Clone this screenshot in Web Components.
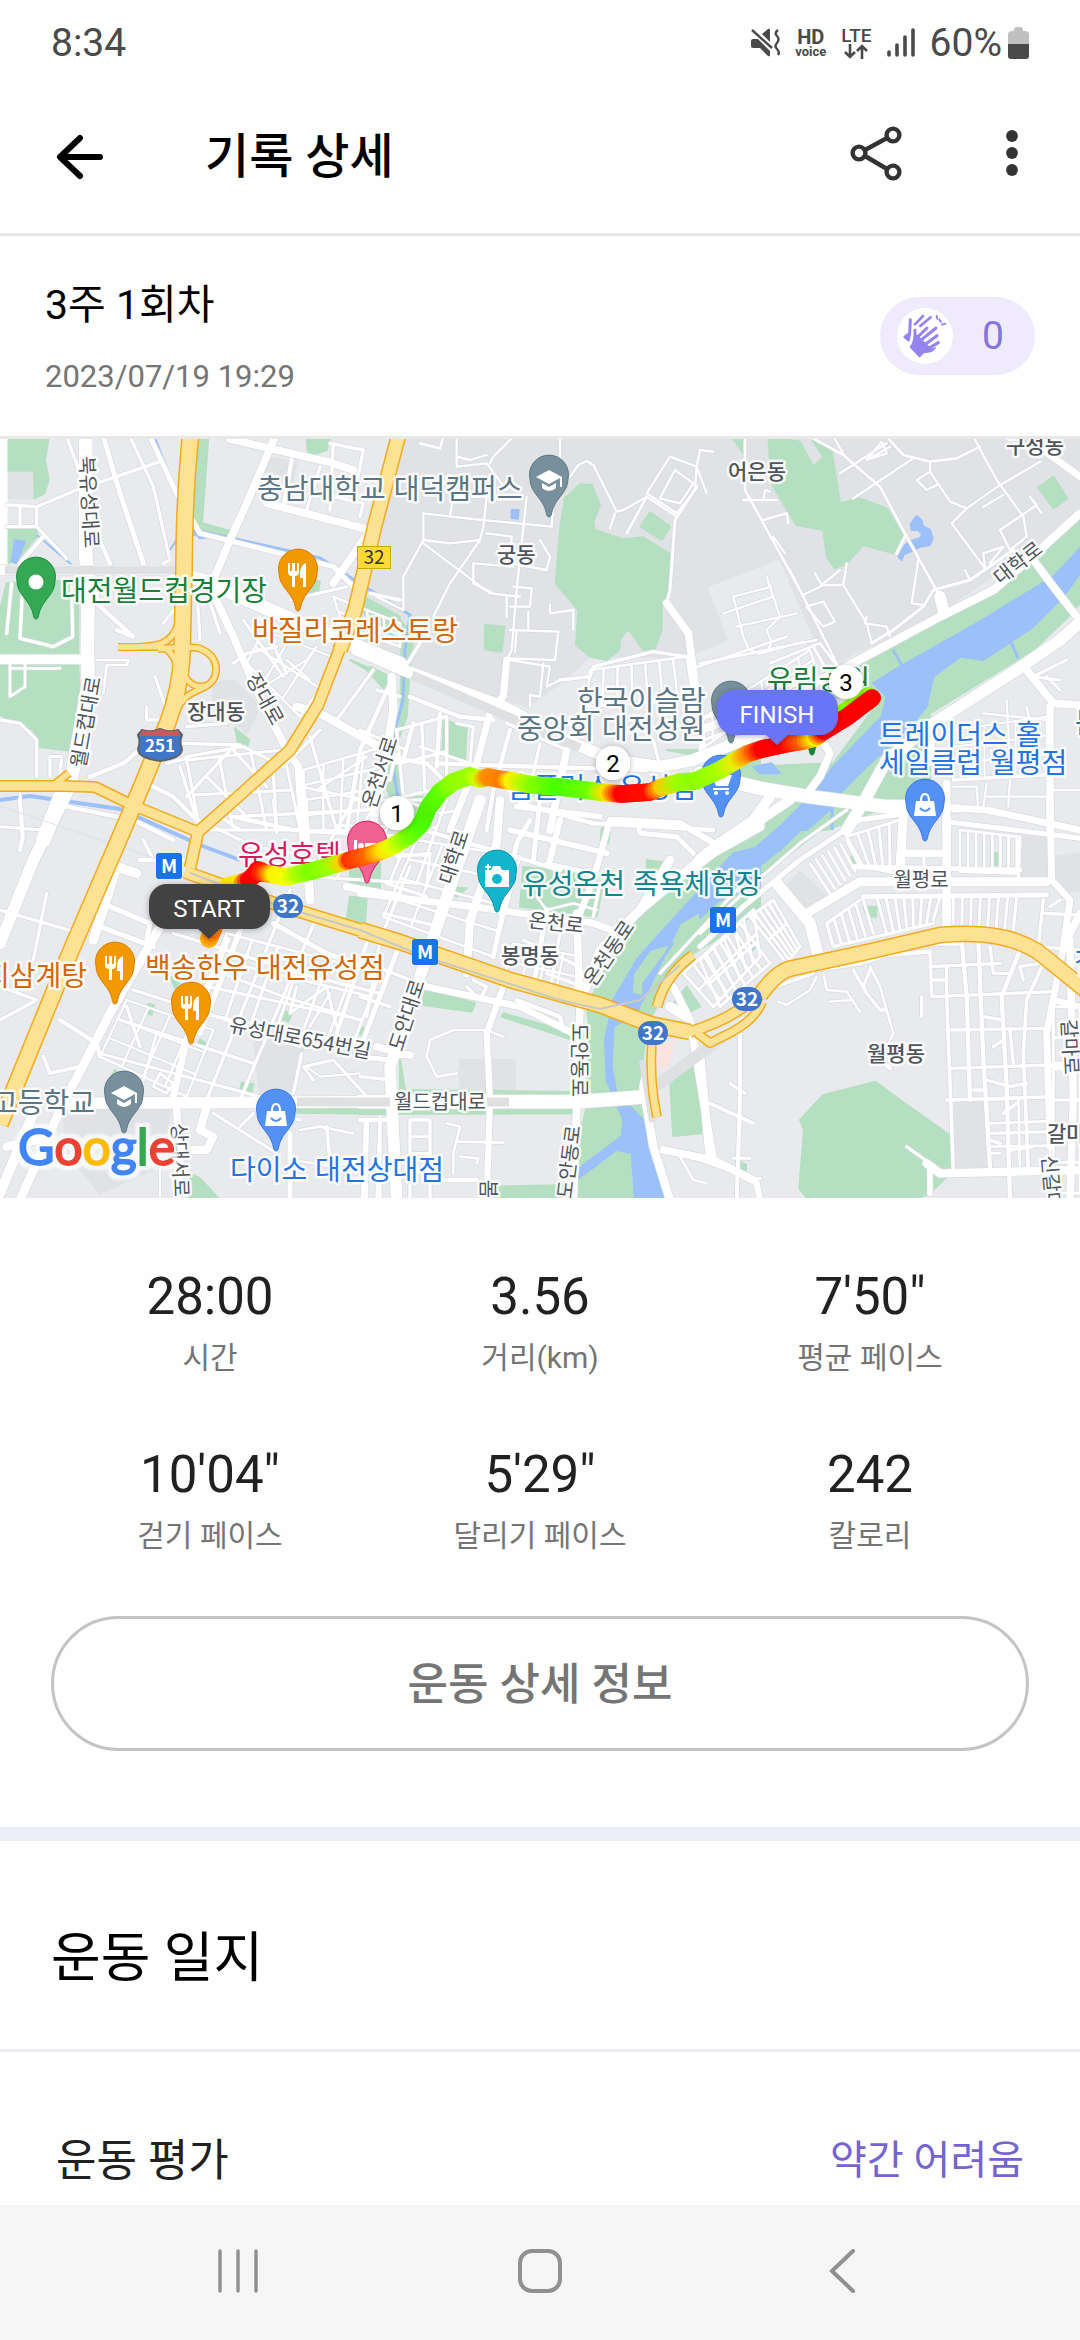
<!DOCTYPE html>
<html lang="ko">
<head>
<meta charset="utf-8">
<meta name="viewport" content="width=device-width, initial-scale=1">
<title>기록 상세</title>
<style>
  body { margin: 0; background: #fefefe; font-family: Roboto, "Noto Sans CJK KR", sans-serif; color: #000; }
</style>
</head>
<body>
<run-app></run-app>

<script>
const define = (name, html, after) => {
  const template = document.createElement('template');
  template.innerHTML = html;
  customElements.define(name, class extends HTMLElement {
    constructor() {
      super();
      this.attachShadow({ mode: 'open' }).append(template.content.cloneNode(true));
      if (after) after(this.shadowRoot, this);
    }
  });
};

define('status-bar', `
<style>
  :host { display: flex; align-items: center; justify-content: space-between; height: 80px; padding: 6px 51px 0; box-sizing: border-box; color: #4a4a4a; font-size: 39px; line-height: 44px; }
  .icons { display: flex; align-items: center; gap: 15px; }
  .stack { display: flex; flex-direction: column; align-items: center; font-weight: 700; font-size: 20px; line-height: 17px; }
  .voice { font-size: 13px; line-height: 11px; }
  .lte { font-weight: 500; font-size: 19px; }
  .power { display: flex; align-items: center; gap: 6px; }
  svg { display: block; }
</style>
<time>8:34</time>
<div class="icons">
  <svg width="30" height="30" viewBox="0 0 30 30" fill="#4a4a4a"><path d="M1 13q0-2 2-2h5l12 12v4q0 2-2 1L10 20H3q-2 0-2-2zM12 6l6-5q2-1 2 1v12z"/><path d="M2 2l20 18M28 2q-4 3-1 6t0 7q-3 3 0 6t1 6" fill="none" stroke="#4a4a4a" stroke-width="2.4"/></svg>
  <span class="stack"><span>HD</span><span class="voice">voice</span></span>
  <span class="stack"><span class="lte">LTE</span><svg width="24" height="15" viewBox="0 0 24 15" fill="none" stroke="#4a4a4a" stroke-width="2.6"><path d="M6 0v13M1 8l5 5 5-5M18 15V2M13 7l5-5 5 5"/></svg></span>
  <svg width="28" height="30" viewBox="0 0 28 30" fill="none" stroke="#4a4a4a" stroke-width="3.6" stroke-linecap="round"><path d="M2 24v3M10 17v10M18 9v18M26 2v25"/></svg>
  <span class="power"><span>60%</span>
  <svg width="21" height="32" viewBox="0 0 21 32"><path d="M6 3q0-3 3-3h3q3 0 3 3v1h2q4 0 4 4v9H0V8q0-4 4-4h2z" fill="#c0c0c0"/><path d="M0 17h21v12q0 3-3 3H3q-3 0-3-3z" fill="#4a4a4a"/></svg></span>
</div>`);

define('app-header', `
<style>
  :host { display: flex; align-items: center; height: 156px; box-sizing: border-box; padding: 0 28px; border-bottom: 3px solid #e8e8e8; }
  button { display: flex; align-items: center; justify-content: center; width: 80px; height: 100px; padding: 0; border: 0; background: none; }
  .back { width: 104px; }
  h1 { flex: 1; margin: 0 0 0 73px; font-size: 48px; line-height: 64px; font-weight: 500; }
  .actions { display: flex; gap: 56px; }
</style>
<button class="back" aria-label="뒤로"><svg width="48" height="48" viewBox="0 0 48 48" fill="none" stroke="#000" stroke-width="6" stroke-linecap="round" stroke-linejoin="round"><path d="M44 24H5M24 5L4 24l20 19"/></svg></button>
<h1><slot></slot></h1>
<div class="actions">
  <button aria-label="공유"><svg width="52" height="62" viewBox="0 0 52 62" fill="none" stroke="#333" stroke-width="4.4"><circle cx="43" cy="9" r="6.4"/><circle cx="9" cy="27" r="6.4"/><circle cx="43" cy="46" r="6.4"/><path d="M15 24l22-12M15 30l22 13"/></svg></button>
  <button aria-label="더보기"><svg width="20" height="54" viewBox="0 0 20 54" fill="#333"><circle cx="10" cy="6" r="5.9"/><circle cx="10" cy="23" r="5.9"/><circle cx="10" cy="40" r="5.9"/></svg></button>
</div>`);

define('cheer-button', `
<style>
  :host { display: block; }
  button { display: flex; align-items: center; width: 155px; height: 78px; padding: 0 0 0 17px; border: 0; border-radius: 39px; background: #efebfd; color: #8676dc; font: 400 39px/46px Roboto, "Noto Sans CJK KR", sans-serif; }
  .icon { width: 56px; height: 56px; border-radius: 50%; background: #fff; }
  .count { flex: 1; text-align: center; padding-right: 2px; }
</style>
<button aria-label="응원 0">
  <svg class="icon" viewBox="591 924 168 168" fill="none" stroke="#9583ee" stroke-linecap="round" stroke-linejoin="round">
    <path d="M631 959l-2 42M629 1000l-14 11 10 9z" stroke-width="9"/>
    <path d="M645 973l24-25M661 978l31-26" stroke-width="8"/>
    <path d="M645 990v22" stroke-width="9"/>
    <path d="M642 1012l8-6 44 42 12-4q-12 14-34 13l-14 13-27-29q9-10 11-29z" fill="#9583ee" stroke-width="4"/>
    <path d="M655 1009l26-25M662 1021l46-37M674 1034l37-27M686 1045l29-17" stroke-width="9"/>
    <path d="M710 948l2 8M718 959l5 7M726 974l10-3" stroke-width="6"/>
  </svg>
  <span class="count"><slot></slot></span>
</button>`);

define('run-summary', `
<style>
  :host { display: flex; align-items: center; justify-content: space-between; height: 203px; box-sizing: border-box; padding: 0 45px; border-bottom: 3px solid #e8e8e8; }
  .text { display: flex; flex-direction: column; gap: 22px; }
  h2 { margin: 0; font-size: 41px; line-height: 60px; font-weight: 400; }
  time { font-size: 31px; line-height: 40px; color: #757575; }
</style>
<div class="text"><h2><slot name="title"></slot></h2><time datetime="2023-07-19T19:29"><slot name="date"></slot></time></div>
<slot name="cheer"></slot>`);

/* ---------- map ---------- */

// The map is drawn in tiles of 400 units; every tile unit is a third of a map unit.
const TILES = { A: [0, 430], B: [360, 430], C: [700, 430], D: [0, 800], E: [360, 800], F: [700, 800] };
const GREEN = {
  A: ['24 20 147 20 135 90 146 150 133 190 104 205 102 122 24 122', '24 295 112 295 110 320 60 380 24 400', '20 460 235 450 235 670 0 675 0 540', '0 705 235 705 240 820 210 962 115 950 100 900 0 855', '596 20 625 20 606 280 700 305 700 325 590 300 575 240', '920 20 992 20 980 60 925 80', '705 895 748 930 742 950 715 945', '1050 690 1170 740 1165 790 1100 720', '930 450 960 455 955 480 930 490', '1090 500 1200 560 1200 590 1110 550', '1150 1010 1200 960 1200 1150 1160 1080'],
  B: ['660 163 695 165 720 225 700 275 705 300 790 328 850 322 928 370 925 480 905 530 905 600 885 655 850 660 815 610 800 598 780 630 778 660 740 690 690 680 648 645 655 540 587 460 600 300 615 205', '0 510 120 570 160 620 150 700 140 860 90 1000 130 1100 190 1100 170 1160 120 1130 75 1040 120 880 125 640 0 540', '250 870 320 890 315 990 247 970', '375 585 433 590 425 665 375 658', '870 247 930 290 905 330 842 290', '30 710 90 740 70 760', '920 960 1200 1010 1200 960 1100 960'],
  C: ['205 20 300 35 340 110 370 80 330 20 395 60 420 220 480 205 560 235 610 320 580 370 490 345 440 400 405 415 380 380 370 300 290 285 250 220 215 160', '95 20 130 20 130 70', '1060 140 1102 205 1060 235 1015 172', '1140 240 1030 380 900 480 700 590 440 730 380 800 540 810 400 1000 160 1010 70 980 30 1030 330 1090 260 1115 130 1200 380 1200 600 1115 690 1115 690 850 1000 660 1105 560 1140 520'],
  D: ['510 530 540 545 525 565', '445 612 462 616 455 645 440 640', '600 718 618 730 608 748 592 742', '845 632 875 640 865 665 842 655', '1080 680 1106 690 1100 710 1075 700', '725 848 760 852 755 876 722 870', '345 810 370 840 330 835', '570 1120 600 1135 660 1200 570 1200', '890 920 1200 930 1200 942 890 938', '1050 180 1140 190 1140 270 1050 260', '1050 290 1100 295 1095 370 1040 360'],
  E: ['1200 80 1010 200 840 340 740 500 680 620 690 700 680 920 650 1050 640 1200 920 1200 850 900 840 860 860 680 900 600 1000 460 1100 400 1200 330', '190 568 345 610 335 635 190 615', '430 640 640 700 640 720 425 650', '490 200 620 215 730 250 710 350 560 330 480 320', '260 262 320 265 290 290', '725 85 750 90 745 130 722 125', '940 610 980 560 1020 620 960 650', '930 840 1020 780 1025 1000 940 1008', '400 1160 640 1155 640 1200 400 1200', '120 780 135 870 640 876 640 890 120 880', '0 932 640 928 640 940 0 942', '860 180 930 190 900 230 860 220', '720 1180 750 1120 690 1140'],
  F: ['340 20 450 20 220 200 0 430 0 200 170 80 240 10', '300 960 370 885 450 865 525 845 600 900 755 1010 760 1110 690 1180 640 1200 325 1200 298 1165 312 990', '150 415 172 435 150 460 138 440', '490 320 530 320 528 350 500 348', '455 170 482 175 478 195 455 190', '875 160 892 160 892 195 872 195', '108 1080 138 1095 138 1110 108 1110']
};
const WATER = {
  A: ['45 330 75 335 50 400 35 395', '575 300 650 320 600 325'],
  B: ['455 240 476 240 474 266 455 264'],
  C: ['650 258 665 272 668 288 690 300 698 325 690 345 660 350 640 362 612 372 605 390 595 380 615 345 635 332 660 325 667 312 655 300 635 300 632 282', '1140 355 1060 440 830 580 600 710 520 760 560 800 545 860 400 1010 330 1100 230 1200 320 1200 400 1130 400 1110 500 1010 620 900 680 830 700 740 780 680 850 690 1000 590 1090 500 1140 430', '160 1010 215 1000 240 1030 180 1030'],
  E: ['1200 140 1120 160 1020 270 900 400 830 480 760 600 735 720 740 840 790 960 785 1010 650 1110 655 1135 770 1050 815 1060 825 1200 915 1200 870 1040 850 960 770 880 755 800 760 680 830 640 850 590 815 580 820 520 870 450 940 430 850 550 850 600 960 370 1100 290 1200 260'],
  F: ['320 15 240 80 100 200 0 250 0 355 110 250 240 150 380 15']
};
const SHADE = {
  A: ['800 80 890 100 870 190 800 170', '24 122 102 122 102 205 24 205', '640 760 700 750 780 830 740 910 640 820', '100 530 150 530 150 610 100 610'],
  B: ['140 0 2160 0 2160 260 1720 560 1400 710 1330 550 1260 385 1040 470 1100 630 1005 670 980 680 690 680 600 760 500 830 240 740 0 640 0 560'],
  D: ['760 700 910 740 880 880 780 880', '190 930 510 930 480 1100 300 1180 200 1060'],
  E: ['300 780 465 780 465 870 300 870'],
  F: ['250 270 300 215 380 290 320 335', '960 110 1040 110 1040 230 960 230', '765 905 855 905 860 1110 768 1100', '1065 170 1140 160 1140 270 1080 280']
};
const ROADS = {
  A: [[40, '257 20 257 380 265 440 262 660 265 760 250 850 215 1040'], [44, '190 1080 130 1230'], [30, '0 420 530 420'], [40, '530 430 620 455 900 580 1200 700'], [28, '0 688 250 688'], [22, '640 450 690 330 740 220 825 20'], [22, '630 470 700 620 760 760 850 940 895 1010 910 1230'], [14, '310 20 360 190 430 400'], [9, '390 20 460 170 510 390 490 400'], [14, '450 20 530 190 600 310 720 340 1000 410 1060 470'], [9, '200 20 240 130'], [9, '290 160 480 95'], [9, '110 230 235 178'], [9, '20 225 110 230 110 290 20 290'], [9, '60 225 60 290'], [9, '110 290 200 385'], [12, '60 400 130 320'], [12, '285 300 330 400'], [22, '690 27 1000 100 1060 120'], [22, '800 220 1110 300 1000 460'], [12, '875 90 850 230'], [9, '960 110 920 240'], [9, '1000 40 990 240'], [9, '990 40 1090 60 1070 160 980 150'], [9, '1000 200 1090 220 1080 260'], [9, '20 610 35 460'], [9, '215 470 218 620 160 650 60 625 68 470'], [7, '30 700 30 800 75 770 75 700'], [7, '30 715 180 715'], [12, '290 450 290 520 400 620 350 600'], [9, '590 470 600 630'], [9, '625 500 660 610'], [9, '530 530 490 580'], [7, '290 690 385 690 380 705 320 705 310 790'], [9, '465 740 500 840'], [9, '440 830 440 870 490 870'], [24, '890 830 960 850 1120 940 1200 990'], [9, '560 980 730 950 850 1010'], [9, '540 1010 600 1200'], [9, '560 1100 700 950'], [9, '700 960 800 1070'], [9, '620 1040 740 1160'], [9, '500 1000 560 985'], [9, '540 940 720 945'], [9, '560 890 680 880'], [12, '270 1040 370 1000 430 950'], [9, '0 870 60 880 110 930 110 1040'], [9, '150 1040 150 980 185 980 180 1030'], [7, '60 1080 65 1200'], [12, '440 1060 520 1100 600 1180'], [9, '660 1160 720 1200'], [9, '820 1030 830 1200'], [12, '1170 760 1080 960 1040 1200'], [9, '930 920 1010 1200'], [9, '860 1000 960 900'], [7, '950 1080 1100 980'], [9, '700 1160 1100 1140'], [7, '900 1070 1100 1110'], [6, '790 770 920 690 950 650'], [6, '860 690 930 750'], [9, '1010 870 1120 720'], [9, '1130 780 1200 800'], [8, '730 570 850 740'], [8, '780 560 860 730'], [9, '700 700 740 670 830 650'], [8, '870 510 1040 470'], [9, '1110 490 1200 510']],
  B: [[7, '180 40 240 55 250 20'], [6, '290 20 290 110 380 100 440 180'], [6, '390 100 400 80 460 20'], [6, '290 80 330 90 380 75'], [6, '600 20 600 90 590 120'], [6, '190 250 190 330 130 440 130 540 50 500'], [6, '190 250 320 265 575 290 580 210'], [6, '270 260 280 200 380 200 370 290 360 330 270 460 220 560'], [6, '500 200 470 480 455 660 440 690'], [6, '380 310 455 320 450 400 560 420 570 380 540 330'], [6, '190 330 270 340 360 330'], [6, '190 340 390 490 480 500'], [6, '340 400 460 410'], [6, '340 400 340 460 400 490'], [6, '440 500 440 560'], [6, '460 470 515 475 510 530 450 530'], [6, '640 600 640 540 570 550 570 525'], [6, '450 600 595 605 585 690 440 685'], [6, '470 600 465 665'], [6, '505 545 505 600'], [6, '450 690 570 710 560 770 600 750'], [6, '550 700 540 800 510 795 510 830'], [6, '630 140 655 105 680 93 700 105 770 245 790 240 860 200 950 260'], [6, '930 80 860 190 950 250 1005 180 1010 110 930 80'], [6, '945 120 1000 160 960 220 900 205 945 120'], [7, '860 200 800 310'], [6, '1010 110 1020 60 1060 65'], [6, '1010 110 1040 190'], [6, '765 250 750 295'], [8, '1010 170 945 270 930 480 920 520'], [22, '920 520 985 610 1000 720 1010 800'], [20, '440 690 430 800 395 830 350 1000 270 1200'], [34, '-10 660 130 720 430 830 640 940 760 990 900 1010 1000 990 1200 910'], [24, '95 740 100 840 80 960 40 1180'], [12, '150 800 300 860 400 870'], [12, '160 880 130 990 200 1000 260 1060'], [12, '240 850 230 1010'], [9, '90 1050 100 1000 150 990'], [9, '180 640 130 720'], [8, '290 880 340 890 330 1000 180 950'], [12, '230 1000 520 1010 860 1020'], [12, '450 900 400 1080 380 1200'], [9, '540 940 500 1120'], [22, '620 960 570 1200'], [9, '440 880 620 960'], [12, '480 1120 700 1180 1060 1200'], [7, '1000 715 1280 620'], [9, '1020 870 1200 800'], [9, '880 930 900 1010'], [9, '0 900 140 960'], [9, '600 750 690 740 700 710 880 665 980 680'], [9, '1030 930 1200 870'], [14, '1020 800 1030 950']],
  C: [[7, '135 20 135 180 190 280 300 480 420 720'], [6, '130 210 230 210'], [6, '190 210 195 180 210 185'], [7, '190 270 260 250 265 280'], [7, '330 20 430 75 540 170 620 320 720 500'], [6, '400 20 435 80'], [6, '460 205 640 85'], [6, '420 130 560 40'], [6, '500 90 560 70 545 35 500 90 570 50'], [7, '560 20 610 75 690 95 770 85 840 50'], [6, '690 95 690 125 650 150 680 180 710 165'], [6, '690 125 750 215 800 235 755 280 855 415'], [6, '820 20 890 150 970 260 980 320 930 360 900 300 1010 225 990 200 1025 250'], [6, '800 235 885 175 1020 95'], [6, '850 230 910 195'], [6, '855 415 850 370 910 350 870 400'], [6, '795 420 810 450'], [6, '655 390 635 520 670 525'], [8, '515 640 580 600 670 530 700 480 810 450 940 360'], [6, '500 560 495 580 560 590 570 620'], [6, '310 495 370 465 430 465 500 580 515 640'], [6, '430 465 440 400'], [6, '345 430 365 465 420 420'], [6, '320 530 370 515 405 575 370 590 320 530'], [6, '100 500 130 620 145 655 175 672 205 660 215 635 200 600 240 560 200 440'], [6, '100 500 215 470'], [6, '70 550 220 500'], [6, '110 590 290 550'], [6, '185 670 310 635'], [6, '220 320 255 370'], [6, '270 420 295 470'], [7, '0 700 350 630'], [7, '210 700 360 640 420 720'], [8, '380 720 340 650'], [8, '590 370 615 320'], [24, '1140 250 1030 350 880 480 720 560 420 720 200 830 0 900'], [34, '720 500 730 540'], [20, '1030 60 1140 140'], [22, '1000 390 1060 470 1130 560'], [34, '1160 560 1080 630 950 720 700 880 560 990 500 1100 440 1200'], [22, '980 720 1060 820 1140 825'], [22, '1050 830 1050 1200'], [8, '1080 750 1000 740 1100 690'], [8, '1040 740 1080 780'], [22, '360 920 390 970 360 1040 330 1080'], [40, '0 1030 180 1075 330 1100 560 1130 620 1130'], [20, '560 1120 860 1140 1140 1200'], [14, '700 920 690 1000'], [22, '740 1060 740 1200'], [9, '760 1050 1030 1035'], [6, '760 1070 830 1070 835 1140 760 1145'], [6, '860 1060 850 1130'], [6, '860 1100 1040 1100'], [6, '930 1050 925 1130'], [6, '920 810 930 1000 870 960'], [6, '850 850 1040 870'], [6, '980 830 1020 1020'], [6, '1140 1080 1060 1080'], [30, '210 1100 160 1170 60 1240']],
  D: [[34, '210 -40 100 180 0 430'], [12, '60 0 68 110 60 150'], [9, '140 280 100 480'], [9, '0 330 240 400'], [12, '200 20 400 60 520 120'], [9, '430 120 460 180'], [12, '420 180 560 180'], [28, '410 220 350 200 280 420'], [14, '330 320 450 370 440 420'], [14, '300 380 460 440'], [26, '480 380 440 450 330 640 180 930 60 1200'], [20, '680 420 560 720 520 890'], [16, '760 290 600 700'], [9, '870 270 620 900'], [9, '950 350 720 900'], [12, '1100 430 1010 700'], [14, '1200 430 1090 720'], [9, '400 570 650 650 900 740'], [9, '520 400 900 520 1140 580'], [8, '590 490 850 590 1080 660'], [14, '820 370 980 460 1140 520'], [9, '360 660 760 790'], [8, '300 760 780 890'], [8, '470 700 430 840'], [7, '480 820 520 850 500 880 460 860 480 820'], [12, '180 660 290 730 300 770'], [9, '0 660 110 600 0 560'], [10, '130 770 150 820 240 800'], [9, '380 620 420 740'], [34, '200 910 1200 905'], [26, '20 1040 150 1010'], [30, '100 940 0 1180'], [22, '530 930 540 1080 530 1200'], [24, '620 920 600 990 640 1010 620 1050 560 1050'], [8, '640 940 830 1060'], [8, '700 900 900 960'], [8, '720 980 760 940'], [14, '870 1000 870 1200'], [16, '1100 960 1090 1200'], [8, '1140 950 1130 1200'], [8, '940 840 910 800 1000 780 1110 900'], [6, '920 800 960 830 1080 820'], [22, '1130 740 1200 760'], [7, '900 990 960 980 1060 1000'], [7, '880 1080 1000 1100 1080 1080'], [10, '980 980 990 1080'], [8, '890 560 870 640 980 560 1010 680'], [7, '990 580 930 680'], [9, '905 760 880 880'], [26, '910 0 930 300'], [8, '0 80 130 90'], [6, '480 1100 480 1200'], [22, '1040 260 1200 290'], [12, '700 50 880 90 1200 110'], [8, '820 0 830 100'], [8, '600 60 760 140 880 160']],
  E: [[34, '360 0 250 320 170 560 90 800 110 1200'], [24, '420 0 410 130 330 360 320 520'], [14, '510 60 470 130 400 470'], [12, '190 90 600 210'], [20, '0 280 340 320 700 370 780 400'], [9, '150 200 60 420 20 650'], [9, '110 170 210 160 200 260'], [9, '80 250 200 290'], [9, '70 340 240 380'], [9, '0 480 200 560'], [9, '0 590 90 620'], [20, '200 560 480 620 640 700'], [9, '320 560 360 600 380 560 340 540'], [18, '430 560 380 700 390 900 380 1200'], [12, '470 600 600 650 610 690'], [14, '560 330 520 560'], [9, '600 400 570 570'], [9, '490 420 660 500'], [9, '560 520 640 550'], [22, '650 340 660 620 650 930 640 1200'], [26, '930 180 840 330 720 450 660 610'], [26, '1200 80 1020 180 840 330'], [40, '0 905 660 905 860 890'], [22, '100 760 150 765'], [16, '470 20 720 50'], [16, '450 90 740 160'], [14, '540 0 520 180'], [18, '600 60 570 180'], [18, '750 60 700 240 660 340'], [14, '830 60 840 100 950 110 1000 160'], [18, '760 60 960 70 1080 140'], [12, '560 190 700 220'], [9, '720 250 700 350'], [6, '530 290 560 330 640 310 710 330'], [24, '890 700 850 860 880 1040 930 1200'], [30, '980 650 930 620'], [34, '1200 60 1080 130 1020 180'], [8, '1140 260 900 520'], [22, '940 560 990 660 1040 960 1060 1080'], [22, '910 1050 1060 1080 1180 1140'], [9, '1000 720 1140 700 1140 960 1130 1200'], [7, '200 770 210 720 280 690 380 690 430 710'], [7, '200 770 230 830 290 820'], [14, '0 770 90 780'], [9, '0 830 100 840'], [12, '0 960 100 960'], [9, '20 960 20 1200'], [9, '60 960 60 1200'], [9, '150 960 210 960 210 1200'], [9, '150 960 150 1200'], [7, '150 1010 210 1010'], [7, '150 1060 210 1060'], [7, '150 1110 210 1110'], [12, '220 1140 350 1140'], [7, '260 970 300 980 280 1060 280 1120'], [7, '290 1025 430 1028'], [7, '300 1070 355 1075 350 1090'], [8, '1050 910 1180 970'], [7, '960 1070 1000 1140 1040 1150'], [7, '130 0 240 40 300 30']],
  F: [[28, '270 0 60 140 -40 220'], [8, '440 30 300 130 140 270 0 400'], [14, '620 40 480 60 300 180 130 320 0 440'], [34, '230 250 330 370 355 470'], [26, '320 340 480 245 1040 245'], [14, '490 290 1040 285'], [14, '460 200 960 210'], [26, '610 50 600 230'], [26, '740 50 740 400'], [22, '620 160 740 160'], [9, '670 160 675 230'], [20, '1050 0 1055 240 1110 300 1090 440 1040 700 1050 1040'], [14, '740 65 1140 115'], [9, '960 110 955 230'], [9, '380 370 400 440 700 370'], [9, '380 370 480 300'], [9, '360 460 230 540'], [14, '700 430 780 430'], [12, '340 510 480 490 560 465 690 455'], [9, '690 460 695 590 1060 575'], [9, '690 500 900 490'], [9, '700 540 740 540'], [9, '740 500 740 590'], [9, '665 590 665 650'], [12, '785 420 800 590 810 900'], [12, '835 420 850 780 870 1100'], [12, '960 450 905 590 920 860 930 1200'], [10, '1030 490 980 600 970 760 985 1110'], [9, '740 690 1040 685'], [10, '740 590 760 1110'], [9, '750 805 1060 795'], [9, '740 900 1060 890'], [9, '870 1000 1060 995'], [24, '680 1090 720 1120 1140 1110'], [8, '620 1040 690 1090'], [16, '690 1100 690 1180'], [9, '930 1050 1000 1040'], [9, '870 1020 900 1030'], [8, '870 1060 900 1060'], [22, '1110 420 1120 900 1110 1200'], [18, '1060 600 1140 620'], [20, '1060 795 1140 795'], [9, '860 840 930 860 980 850'], [9, '910 940 950 910'], [9, '870 440 880 520 930 520'], [9, '970 540 960 500 1020 490'], [9, '850 650 910 660'], [9, '880 740 910 720'], [9, '930 690 940 790'], [7, '510 500 540 560 560 630 580 700 560 740'], [9, '460 510 500 580 540 630 560 630'], [9, '510 510 490 560'], [7, '370 520 380 570 440 575 480 635'], [6, '390 605 460 600'], [7, '235 605 260 615 330 570 350 530'], [9, '200 570 340 520'], [10, '120 700 120 860 110 1200'], [9, '90 850 135 880'], [10, '30 910 160 970'], [24, '0 760 30 1080'], [18, '0 1075 100 1110 170 1150 180 1200'], [10, '180 1135 150 1140'], [8, '100 1075 150 1075'], [12, '560 795 570 805'], [9, '820 870 860 870'], [22, '1140 340 1110 400'], [9, '1030 340 1140 345'], [9, '1030 300 1015 440 1140 450'], [9, '1050 320 1080 300']]
};
// Residential blocks: corner points, columns, rows, street width.
const BLOCKS = [
  ['B', [690, 720], [980, 680], [1000, 810], [680, 830], 7, 1, 7], ['F', [530, 290], [720, 290], [700, 360], [560, 400], 7, 0, 8],
  ['F', [760, 290], [950, 290], [940, 390], [760, 370], 7, 0, 8], ['F', [780, 90], [950, 110], [950, 220], [780, 215], 7, 1, 7],
  ['F', [440, 110], [600, 60], [590, 220], [490, 200], 5, 1, 8], ['F', [330, 190], [440, 120], [480, 200], [390, 280], 6, 0, 8],
  ['F', [150, 350], [220, 300], [300, 440], [260, 490], 5, 2, 8], ['F', [0, 480], [120, 370], [210, 490], [60, 620], 6, 2, 8],
  ['F', [380, 370], [490, 300], [520, 400], [400, 440], 5, 0, 8], ['E', [970, 520], [1180, 330], [1200, 470], [1060, 620], 7, 2, 8],
  ['A', [910, 1020], [1150, 950], [1120, 1200], [920, 1200], 4, 4, 7], ['A', [560, 990], [850, 960], [900, 1200], [600, 1200], 3, 2, 8],
  ['A', [790, 600], [1020, 690], [900, 860], [740, 700], 3, 2, 6], ['A', [1000, 500], [1200, 580], [1200, 650], [1030, 590], 4, 2, 6],
  ['D', [1060, 0], [1340, 0], [1250, 250], [930, 230], 4, 3, 8], ['D', [680, 400], [1140, 520], [1060, 730], [600, 640], 6, 3, 8],
  ['D', [380, 600], [640, 690], [560, 890], [300, 770], 4, 3, 6], ['E', [170, 120], [480, 170], [400, 470], [70, 350], 4, 4, 7],
  ['E', [460, 430], [660, 470], [640, 590], [430, 540], 4, 2, 6], ['B', [110, 900], [260, 860], [260, 1070], [130, 1100], 2, 2, 9],
  ['C', [0, 870], [330, 660], [350, 720], [0, 960], 9, 2, 6], ['F', [860, 900], [1050, 890], [1050, 1110], [870, 1110], 2, 3, 7],
  ['F', [1060, 620], [1140, 620], [1140, 1180], [1060, 1180], 1, 6, 8], ['C', [760, 900], [1040, 860], [1040, 1030], [760, 1050], 3, 3, 5]
];
const lerp = (p, q, t) => [p[0] + (q[0] - p[0]) * t, p[1] + (q[1] - p[1]) * t];
for (const [tile, p, q, r, s, cols, rows, w] of BLOCKS) {
  for (let i = 0; i <= cols; i++) ROADS[tile].push([w, [...lerp(p, q, i / cols), ...lerp(s, r, i / cols)].join(' ')]);
  for (let j = 0; rows && j <= rows; j++) ROADS[tile].push([w, [...lerp(p, s, j / rows), ...lerp(q, r, j / rows)].join(' ')]);
}
const inTiles = (set, draw) => Object.entries(set).map(([k, list]) =>
  `<g transform="translate(${TILES[k]}) scale(.33333)">${list.map(draw).join('')}</g>`).join('');
const areas = (set, fill) => `<g fill="${fill}" stroke="${fill}" stroke-width="6" stroke-linejoin="round">${inTiles(set, d => `<polygon points="${d}"/>`)}</g>`;
const roads = (extra, colour) => `<g fill="none" stroke="${colour}" stroke-linecap="round" stroke-linejoin="round">${inTiles(ROADS, ([w, d]) => `<polyline stroke-width="${w + 1 + extra}" points="${d}"/>`)}</g>`;

const HIGHWAYS = [
  [5, 'M118 647H158C174 648 178 664 180 686'], [5, 'M118 647C160 648 172 644 178 624'], [5, 'M158 649C175 647 190 647 198 648 212 652 219 664 215 676 210 690 192 690 185 676'], [5, 'M209 684C200 692 185 690 176 712'],
  [6, 'M55 784L69 773'], [9, 'M0 786L65 786 95 787 130 804 198 832'],
  [10, 'M340 648L318 705 290 750 240 795 198 832 190 868'], [13, 'M400 430L375 525 355 610 340 650'],
  [15, 'M191 430Q184 500 184 570L182 655Q180 690 168 722L143 783 123 830 67 960 0 1124'],
  [11, 'M185 872L273 903 360 930'], [14, 'M360 930L400 942 510 980 600 1005 650 1024 690 1032'],
  [9, 'M690 1032Q730 1020 760 995'], [7, 'M697 1033L710 1043 730 1033Q755 1020 762 1002'],
  [14, 'M760 995Q778 970 793 968L867 952 940 935Q975 932 1000 937 1018 940 1037 951L1088 992'],
  [8, 'M693 955Q665 975 657 1007'], [7, 'M652 1040Q649 1080 657 1117']
];
const highways = (extra, colour) => `<g fill="none" stroke="${colour}" stroke-linejoin="round">${HIGHWAYS.map(([w, d]) => `<path stroke-width="${w + extra}" d="${d}"/>`).join('')}</g>`;

const ROUTE = [[209, 939, '#ffb000'], [213, 930, '#ff7000'], [219, 905, '#ffd000'], [228, 886, '#ffe600'], [240, 883, '#ffe600'], [249, 880, '#f00'], [258, 871, '#f00'], [264, 873, '#ff3c00'], [275, 875, '#fff200'], [288, 877, '#f4ff00'], [298, 874, '#b4ff00'], [312, 871, '#7cff00'], [333, 865, '#a0ff00'], [344, 862, '#ffd000'], [350, 860, '#ff3000'], [370, 855, '#ff6a00'], [384, 850, '#ffe000'], [393, 846, '#e8ff00'], [409, 836, '#7cff00'], [422, 823, '#4cff00'], [428, 808, '#50f000'], [440, 792, '#5cff00'], [453, 782, '#90ff00'], [470, 776, '#98ff00'], [480, 779, '#d0ff00'], [488, 777, '#ff9000'], [504, 780, '#ff7a00'], [512, 781, '#fff000'], [533, 785, '#8cff00'], [560, 787, '#48ff00'], [593, 791, '#70ff00'], [608, 793, '#ffe000'], [622, 794, '#f00'], [650, 792, '#ff1000'], [662, 787, '#ffc800'], [680, 782, '#a0ff00'], [695, 781, '#8cff00'], [720, 770, '#a4ff00'], [737, 760, '#e8f000'], [747, 754, '#ff9800'], [762, 749, '#f00'], [785, 744, '#f00'], [803, 741, '#ff6000'], [815, 738, '#ffee00'], [824, 731, '#f00'], [847, 717, '#f00'], [872, 698, '#f00']];
const rgb = c => (c.length === 4 ? [...c.slice(1)].map(x => parseInt(x + x, 16)) : [1, 3, 5].map(i => parseInt(c.slice(i, i + 2), 16)));
let route = '<path d="M826 722L868 694" stroke="#8cff00" stroke-width="14" stroke-linecap="round"/>';
ROUTE.forEach(([x, y, c], i) => {
  const next = ROUTE[i + 1] || [x, y, c], a = rgb(c), b = rgb(next[2]);
  const steps = Math.max(1, Math.round(Math.hypot(next[0] - x, next[1] - y) / 3));
  for (let s = 0; s < steps; s++) {
    const t = s / steps;
    route += `<circle cx="${x + (next[0] - x) * t}" cy="${y + (next[1] - y) * t}" r="${x < 262 && x > 250 ? 10 : 9}" fill="rgb(${a.map((v, k) => Math.round(v + (b[k] - v) * t))})"/>`;
  }
});

const GLYPHS = {
  dot: '<circle cy="-37" r="7.5"/>',
  food: '<path d="M-10-48v9q0 4 4 4v11h3v-11q4 0 4-4v-9h-2v8h-2v-8h-3v8h-2v-8zM8-48q-6 2-6 11v4h3v9h3z"/>',
  school: '<path d="M0-47l-13 7 13 7 11-6v9h2v-10zM-7-34v5q7 6 14 0v-5l-7 4z"/>',
  bag: '<path d="M-9-40H9l2 15h-22z"/><path d="M-4-40q0-7 4-7t4 7" fill="none" stroke="#fff" stroke-width="2"/><path d="M-5-33q5 6 10 0" fill="none" stroke="#5491f5" stroke-width="2"/>',
  camera: '<path d="M-12-42h6l2-4h7l2 4h7v17h-24z"/><circle cy="-33" r="5" fill="#12b5cb"/><path d="M-9-48v6M-12-45h6" stroke="#fff" stroke-width="2"/>',
  bed: '<path d="M-13-43h3v9h8v-6h9q6 0 6 6v9h-3v-4h-20v4h-3z"/><circle cx="-6" cy="-37" r="3"/>',
  cart: '<path d="M-13-46h5l2 4h17l-4 11h-12l-5-12h-3zM-8-29h16v2h-16z"/><circle cx="-5" cy="-24" r="2"/><circle cx="6" cy="-24" r="2"/>',
  none: ''
};
const pin = (x, y, fill, edge, glyph) => `<g transform="translate(${x} ${y})"><path fill="${fill}" stroke="${edge}" d="M0 0C-3 0-2-5-5-11-9-20-19-26-19-38A19.500 19.500 0 1 1 19-38C19-26 9-20 5-11 2-5 3 0 0 0Z"/><g fill="#fff">${GLYPHS[glyph]}</g></g>`;
const pins = [
  [36, 619, '#34a853', '#1e8e3e', 'dot'], [298, 611, '#f29900', '#d97b00', 'food'], [549, 517, '#78909c', '#5a7583', 'school'],
  [115, 1004, '#f29900', '#d97b00', 'food'], [191, 1044, '#f29900', '#d97b00', 'food'], [124, 1133, '#78909c', '#5a7583', 'school'],
  [276, 1151, '#5491f5', '#3b78e7', 'bag'], [497, 912, '#12b5cb', '#0b8f9c', 'camera'], [925, 841, '#5491f5', '#3b78e7', 'bag'],
  [731, 743, '#78909c', '#5a7583', 'none'], [721, 817, '#5491f5', '#3b78e7', 'cart'], [367, 883, '#f06292', '#d81b60', 'bed'], [812, 755, '#188038', '#188038', 'none']
].map(p => pin(...p)).join('');

const poi = [
  [257, 499, '#5a7583', '충남대학교 대덕캠퍼스'], [61, 601, '#188038', '대전월드컵경기장'], [252, 641, '#d0690c', '바질리코레스토랑'],
  [577, 711, '#5a7583', '한국이슬람'], [517, 739, '#5a7583', '중앙회 대전성원'], [767, 690, '#188038', '유림공원'],
  [879, 745, '#2374e1', '트레이더스 홀'], [879, 773, '#2374e1', '세일클럽 월평점'], [508, 798, '#2374e1', '홈플러스 유성점'],
  [238, 865, '#d81b60', '유성호텔'], [522, 894, '#12858d', '유성온천 족욕체험장'], [145, 978, '#d0690c', '백송한우 대전유성점'],
  [-16, 986, '#d0690c', '지삼계탕'], [-8, 1113, '#5a7583', '고등학교'], [230, 1180, '#2374e1', '다이소 대전상대점'],
  [1075, 733, '#12858d', '둔'], [1074, 973, '#2374e1', '갤']
].map(([x, y, c, t]) => `<text x="${x}" y="${y}" fill="${c}">${t}</text>`).join('');
const towns = [[187, 719, '장대동'], [497, 562, '궁동'], [728, 479, '어은동'], [1006, 453, '구성동'], [501, 963, '봉명동'], [867, 1061, '월평동'], [1047, 1141, '갈마']]
  .map(([x, y, t]) => `<text x="${x}" y="${y}">${t}</text>`).join('');
const streets = [[89, 502, 87, '북유성대로'], [86, 722, -80, '월드컵대로'], [265, 699, 61, '장대로'], [380, 772, -72, '온천서로'], [1018, 563, -38, '대학로'], [454, 857, -72, '대학로'], [556, 923, 6, '온천로'], [609, 953, -56, '온천동로'], [407, 1015, -72, '도안대로'], [579, 1060, 90, '도안동로'], [569, 1162, -83, '도안동로'], [440, 1102, 0, '월드컵대로'], [300, 1038, 11, '유성대로654번길'], [180, 1160, 88, '상대서로'], [488, 1189, 90, '봄'], [1070, 1047, 87, '갈마로'], [1052, 1192, 85, '신갈마로'], [921, 880, 0, '월평로']]
  .map(([x, y, a, t]) => `<text transform="translate(${x} ${y}) rotate(${a})" y="7">${t}</text>`).join('');

const metro = [[156, 853], [412, 939], [710, 907]].map(([x, y]) => `<rect x="${x}" y="${y}" width="26" height="26" rx="3" fill="#1a73e8"/><text x="${x + 13}" y="${y + 20}">M</text>`).join('');
const ovals = [[288, 906], [653, 1033], [747, 999]].map(([x, y]) => `<rect x="${x - 15}" y="${y - 12}" width="30" height="24" rx="12" fill="#3f76c8"/><text x="${x}" y="${y + 7}">32</text>`).join('');
const marks = [[397, 813, 1], [613, 763, 2], [846, 682, 3]].map(([x, y, n]) => `<circle cx="${x}" cy="${y}" r="17" fill="#fff" filter="url(#soft)"/><text x="${x}" y="${y + 9}" fill="#000">${n}</text>`).join('');
const bubble = (x, y, fill, t) => `<g filter="url(#soft)" fill="${fill}"><rect x="${x - 60}" y="${y}" width="121" height="45" rx="18"/><path d="M${x - 12} ${y + 44}h24l-12 11z"/></g><text x="${x}" y="${y + 33}" fill="#fff">${t}</text>`;
const logo = ['G#4285f4', 'o#ea4335', 'o#fbbc04', 'g#4285f4', 'l#34a853', 'e#ea4335'].map(s => `<tspan fill="${s.slice(1)}" stroke="${s.slice(1)}">${s[0]}</tspan>`).join('');

define('route-map', `
<style>
  :host { display: block; }
  svg { display: block; width: 100%; height: auto; }
  text { font-family: "Noto Sans CJK KR", sans-serif; }
  .halo { paint-order: stroke; stroke: #fff; stroke-opacity: .85; stroke-width: 5; stroke-linejoin: round; }
  .poi { font-size: 28px; }
  .town { font-size: 21px; font-weight: 500; fill: #50555a; }
  .street { font-size: 20px; fill: #50555a; text-anchor: middle; }
  .sign { font-size: 19px; font-weight: 700; fill: #fff; text-anchor: middle; }
  .mark text { font: 400 24px Roboto, sans-serif; text-anchor: middle; }
  .logo { font: 400 50px Lato, sans-serif; stroke-width: 2; }
</style>
<svg viewBox="0 439 1080 759" role="img" aria-label="달리기 경로 지도">
  <defs>
    <filter id="soft" x="-30%" y="-30%" width="160%" height="170%"><feDropShadow dx="0" dy="1" stdDeviation="3" flood-opacity=".3"/></filter>
    <filter id="glow" x="-10%" y="-20%" width="120%" height="140%"><feMorphology in="SourceAlpha" operator="dilate" radius="4"/><feGaussianBlur stdDeviation="1" result="b"/><feFlood flood-color="#fff" flood-opacity=".75"/><feComposite in2="b" operator="in" result="w"/><feMerge><feMergeNode in="w"/><feMergeNode in="SourceGraphic"/></feMerge></filter>
  </defs>
  <rect y="430" width="1080" height="780" fill="#e8eaed"/>
  ${areas(SHADE, '#e0e2e6')}${areas(GREEN, '#b4dfc1')}${areas(WATER, '#9cc0f9')}
  <g fill="none" stroke="#9cc0f9" stroke-width="3"><path d="M155 439L172 483 195 530 240 540 320 558 370 590 410 615 405 650 403 700 390 750 400 810"/><path d="M0 800L30 796 120 809 200 845 240 860" stroke-width="4"/><path d="M37 535L72 565M170 550L178 538 195 535" stroke-width="2"/><path d="M832 795v35M893 650l10 17M1010 640l8 18" /></g>
  <path d="M655 1045l20-3-8 28-12-5z" fill="#fbe3e1"/><path d="M3 439v131" stroke="#fff" stroke-width="9"/>
  ${roads(4, '#d6d9de')}${roads(0, '#fff')}
  <g fill="none" stroke="#dfe0e2" stroke-linecap="butt"><path d="M5 570H175" stroke-width="9"/><path d="M412 675L580 748" stroke-width="9"/><path d="M297 1102H390M487 1102h22" stroke-width="9"/><path d="M648 1092L725 1035" stroke-width="12"/><path d="M643 1060L653 1122" stroke-width="8"/><path d="M0 806L160 860" stroke-width="1"/></g>
  ${highways(3, '#f2ab1d')}${highways(0, '#fde293')}
  <path d="M190 873L270 903 360 930 420 955 560 1000 600 1009 640 1000 680 965" fill="none" stroke="#c9c9c4" stroke-width="2"/>
  <g class="sign">
    <rect x="357.500" y="546.500" width="33" height="22" fill="#fddb33" stroke="#c9a800"/><text x="374" y="564" fill="#333" font-weight="400">32</text>
    <path d="M142 730q9 3 18-1 9 4 18 1l4 5q-3 7 0 14 0 9-22 12-22-3-22-12 3-7 0-14z" fill="#3f76c8" stroke="#5f6368" stroke-width="2"/><path d="M142 730q9 3 18-1 9 4 18 1l2 6h-40z" fill="#c9585c"/><text x="160" y="752" font-size="17">251</text>
    ${metro}${ovals}
  </g>
  <g class="halo town">${towns}</g><g class="halo street">${streets}</g>
  ${pins}
  <g class="halo poi">${poi}</g>
  <g fill="none">${route}</g>
  <g class="mark">${marks}${bubble(209, 884, '#434343', 'START')}${bubble(777, 690, '#6874fb', 'FINISH')}</g>
  <text class="logo" x="18" y="1165" filter="url(#glow)">${logo}</text>
</svg>`);

define('run-stat', `
<style>
  :host { display: flex; flex-direction: column; align-items: center; gap: 11px; }
  .value { font-size: 51px; line-height: 60px; color: #212121; }
  .label { font-size: 30px; line-height: 40px; color: #757575; }
</style>
<span class="value"><slot></slot></span><span class="label"><slot name="label"></slot></span>`);

define('stat-grid', `
<style>:host { display: grid; grid-template-columns: repeat(3, 1fr); row-gap: 67px; padding: 69px 45px 0; }</style>
<slot></slot>`);

define('outline-button', `
<style>
  :host { display: block; padding: 60px 51px 76px; }
  button { display: block; width: 100%; height: 135px; padding: 3px 0 0; border: 3px solid #c4c4c4; border-radius: 68px; background: none; color: #757575; font: 500 44px/60px Roboto, "Noto Sans CJK KR", sans-serif; }
</style>
<button><slot></slot></button>`);

define('journal-section', `
<style>
  :host { display: block; border-top: 14px solid #ebeef6; }
  h2 { margin: 0; padding: 78px 51px 50px; font-size: 54px; line-height: 80px; font-weight: 400; border-bottom: 3px solid #ebeef6; }
</style>
<h2><slot name="heading"></slot></h2><slot></slot>`);

define('journal-row', `
<style>
  :host { display: flex; justify-content: space-between; align-items: center; padding: 79px 56px 14px; color: #212121; font-size: 44px; line-height: 60px; }
  .value { font-size: 40px; color: #7563cf; }
</style>
<span><slot></slot></span><span class="value"><slot name="value"></slot></span>`);

define('nav-bar', `
<style>
  :host { display: grid; grid-template-columns: repeat(3, 28%); justify-content: center; height: 135px; background: #f6f6f6; }
  button { display: flex; align-items: center; justify-content: center; padding: 0 0 4px; border: 0; background: none; }
</style>
<button aria-label="최근 앱"><svg width="44" height="44" viewBox="0 0 44 44" stroke="#909090" stroke-width="3.4" stroke-linecap="round"><path d="M4 2v40M22 2v40M40 2v40"/></svg></button>
<button aria-label="홈"><svg width="44" height="44" viewBox="0 0 44 44" fill="none" stroke="#909090" stroke-width="4"><rect x="2" y="2" width="40" height="40" rx="12"/></svg></button>
<button aria-label="뒤로"><svg width="26" height="44" viewBox="0 0 26 44" fill="none" stroke="#909090" stroke-width="4" stroke-linecap="round"><path d="M24 2L3 22l21 20"/></svg></button>`);

define('run-app', `
<style>
  :host { display: flex; flex-direction: column; min-height: 100vh; }
  main { flex: 1; }
</style>
<status-bar></status-bar>
<app-header>기록 상세</app-header>
<main>
  <run-summary><span slot="title">3주 1회차</span><span slot="date">2023/07/19 19:29</span><cheer-button slot="cheer">0</cheer-button></run-summary>
  <route-map></route-map>
  <stat-grid>
    <run-stat>28:00<span slot="label">시간</span></run-stat>
    <run-stat>3.56<span slot="label">거리(km)</span></run-stat>
    <run-stat>7'50"<span slot="label">평균 페이스</span></run-stat>
    <run-stat>10'04"<span slot="label">걷기 페이스</span></run-stat>
    <run-stat>5'29"<span slot="label">달리기 페이스</span></run-stat>
    <run-stat>242<span slot="label">칼로리</span></run-stat>
  </stat-grid>
  <outline-button>운동 상세 정보</outline-button>
  <journal-section><span slot="heading">운동 일지</span>
    <journal-row>운동 평가<span slot="value">약간 어려움</span></journal-row>
  </journal-section>
</main>
<nav-bar></nav-bar>`);
</script>
</body>
</html>
